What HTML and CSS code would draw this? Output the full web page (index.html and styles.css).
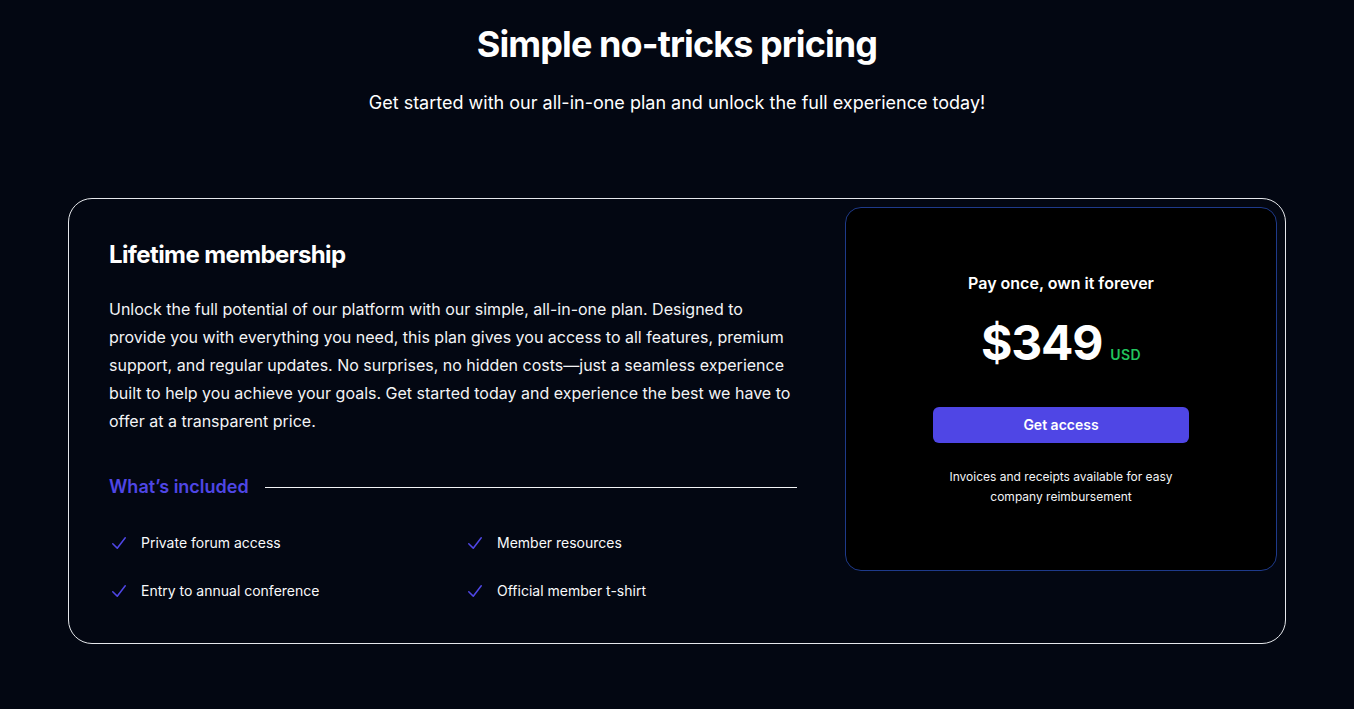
FILE: index.html
```html
<!DOCTYPE html>
<html lang="en">
<head>
<meta charset="utf-8">
<title>Pricing</title>
<link rel="stylesheet" href="styles.css">
</head>
<body>
<section class="pricing">
  <div class="intro">
    <h2 class="title">Simple no-tricks pricing</h2>
    <p class="subtitle">Get started with our all-in-one plan and unlock the full experience today!</p>
  </div>
  <div class="card">
    <div class="details">
      <h3 class="plan-name">Lifetime membership</h3>
      <p class="plan-desc">Unlock the full potential of our platform with our simple, all-in-one plan. Designed to provide you with everything you need, this plan gives you access to all features, premium support, and regular updates. No surprises, no hidden costs—just a seamless experience built to help you achieve your goals. Get started today and experience the best we have to offer at a transparent price.</p>
      <div class="included">
        <h4 class="included-title">What’s included</h4>
        <div class="included-line"></div>
      </div>
      <ul class="features">
        <li class="feature"><svg class="check" viewBox="0 0 20 20" aria-hidden="true"><path d="M16.704 4.153a.75.75 0 01.143 1.052l-8 10.5a.75.75 0 01-1.127.075l-4.5-4.5a.75.75 0 011.06-1.06l3.894 3.893 7.48-9.817a.75.75 0 011.05-.143z"/></svg>Private forum access</li>
        <li class="feature"><svg class="check" viewBox="0 0 20 20" aria-hidden="true"><path d="M16.704 4.153a.75.75 0 01.143 1.052l-8 10.5a.75.75 0 01-1.127.075l-4.5-4.5a.75.75 0 011.06-1.06l3.894 3.893 7.48-9.817a.75.75 0 011.05-.143z"/></svg>Member resources</li>
        <li class="feature"><svg class="check" viewBox="0 0 20 20" aria-hidden="true"><path d="M16.704 4.153a.75.75 0 01.143 1.052l-8 10.5a.75.75 0 01-1.127.075l-4.5-4.5a.75.75 0 011.06-1.06l3.894 3.893 7.48-9.817a.75.75 0 011.05-.143z"/></svg>Entry to annual conference</li>
        <li class="feature"><svg class="check" viewBox="0 0 20 20" aria-hidden="true"><path d="M16.704 4.153a.75.75 0 01.143 1.052l-8 10.5a.75.75 0 01-1.127.075l-4.5-4.5a.75.75 0 011.06-1.06l3.894 3.893 7.48-9.817a.75.75 0 011.05-.143z"/></svg>Official member t-shirt</li>
      </ul>
    </div>
    <div class="buy-wrap">
      <div class="buy">
        <div class="buy-inner">
          <p class="buy-lead">Pay once, own it forever</p>
          <p class="price"><span class="amount">$349</span><span class="currency">USD</span></p>
          <a href="#" class="cta">Get access</a>
          <p class="note">Invoices and receipts available for easy company reimbursement</p>
        </div>
      </div>
    </div>
  </div>
</section>
</body>
</html>
```
FILE: styles.css
```css
* { box-sizing: border-box; }
html, body { margin: 0; padding: 0; }
body {
  background: #030712;
  color: #ffffff;
  font-family: Inter, "Noto Sans", "Liberation Sans", sans-serif;
  height: 709px;
  overflow: hidden;
}
.pricing {
  padding: 24px 68px 0;
}
.intro { text-align: center; }
.title {
  margin: 0;
  font-size: 36px;
  line-height: 40px;
  font-weight: 700;
  letter-spacing: -0.9px;
}
.subtitle {
  margin: 25px 0 0;
  font-size: 18px;
  line-height: 28px;
}
.card {
  margin-top: 81px;
  border: 1px solid #e5e7eb;
  border-radius: 24px;
  display: flex;
}
.details {
  flex: 1 1 auto;
  padding: 40px;
}
.plan-name {
  margin: 0;
  font-size: 24px;
  line-height: 32px;
  font-weight: 700;
  letter-spacing: -0.6px;
}
.plan-desc {
  margin: 24px 0 0;
  font-size: 16px;
  line-height: 28px;
  color: #f3f4f6;
}
.included {
  margin-top: 40px;
  display: flex;
  align-items: center;
  gap: 16px;
}
.included-title {
  margin: 0;
  flex: none;
  font-size: 18px;
  line-height: 24px;
  font-weight: 600;
  color: #4f46e5;
}
.included-line {
  flex: 1 1 auto;
  height: 1px;
  background: #f3f4f6;
}
.features {
  list-style: none;
  margin: 32px 0 0;
  padding: 0;
  display: grid;
  grid-template-columns: 1fr 1fr;
  gap: 24px;
  font-size: 14px;
  line-height: 24px;
}
.feature {
  display: flex;
  gap: 12px;
  color: #f9fafb;
}
.check {
  flex: none;
  width: 20px;
  height: 24px;
  fill: #4f46e5;
}
.buy-wrap {
  flex: 0 0 448px;
  padding: 8px;
  align-self: flex-start;
}
.buy {
  background: #000000;
  border: 1px solid #1e3a8a;
  border-radius: 16px;
  padding: 63px 0;
  text-align: center;
}
.buy-inner {
  max-width: 320px;
  margin: 0 auto;
  padding: 0 32px;
}
.buy-lead {
  margin: 0;
  font-size: 16px;
  line-height: 24px;
  font-weight: 600;
}
.price {
  margin: 24px 0 0;
  display: flex;
  align-items: baseline;
  justify-content: center;
  gap: 8px;
}
.amount {
  font-size: 48px;
  line-height: 48px;
  font-weight: 700;
  letter-spacing: -1.2px;
}
.currency {
  font-size: 14px;
  line-height: 24px;
  font-weight: 600;
  letter-spacing: 0.35px;
  color: #22c55e;
}
.cta {
  display: block;
  margin-top: 40px;
  background: #4f46e5;
  border-radius: 6px;
  padding: 8px 12px;
  font-size: 14px;
  line-height: 20px;
  font-weight: 600;
  color: #ffffff;
  text-decoration: none;
}
.note {
  margin: 24px 0 0;
  font-size: 12px;
  line-height: 20px;
  color: #f3f4f6;
}
```
